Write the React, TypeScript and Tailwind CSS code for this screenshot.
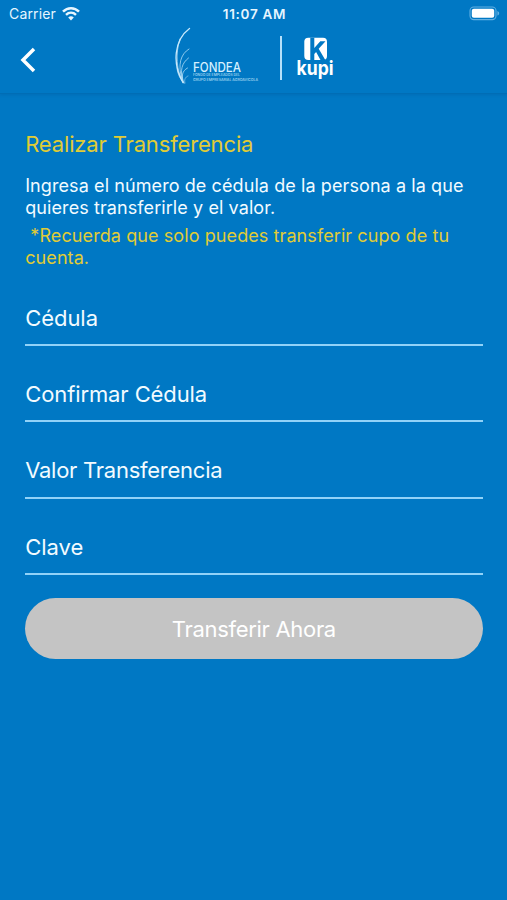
const fields = [
  { label: 'Cédula', spacing: 'tracking-[-0.05px]' },
  { label: 'Confirmar Cédula', spacing: 'tracking-[-0.1px]' },
  { label: 'Valor Transferencia', spacing: 'tracking-[-0.25px]' },
  { label: 'Clave', spacing: 'tracking-normal' },
]

function StatusBar() {
  return (
    <div className="grid h-7 grid-cols-3 items-center pr-[7px] pl-[9px] text-[#e6f6ff]">
      <div className="-mt-px flex items-center gap-[6px]">
        <span className="text-[14px] tracking-[0.15px]">Carrier</span>
        <svg className="h-[14px] w-[18px]" viewBox="0 0 18 14" fill="none">
          <path d="M1 4.7C5.6.1 12.4.1 17 4.7" stroke="currentColor" strokeWidth="2.5" />
          <path d="M4 7.9c2.9-2.8 7.1-2.8 10 0" stroke="currentColor" strokeWidth="2.4" />
          <path d="M6.2 10.4c1.7-1.5 3.9-1.5 5.6 0L9 13.5z" fill="currentColor" />
        </svg>
      </div>
      <span className="text-center text-[13.5px] font-semibold tracking-[0.7px] whitespace-nowrap">
        11:07 AM
      </span>
      <svg className="-mt-px h-[15px] w-[31px] justify-self-end" viewBox="0 0 31 15" fill="none">
        <rect x="1" y="1" width="26" height="12.6" rx="3.8" stroke="#62b0e2" strokeWidth="1.1" />
        <rect x="2.8" y="2.8" width="22.4" height="9" rx="2" fill="#fff" />
        <path d="M28.4 5v4.600c2.400-.8 2.400-3.800 0-4.600z" fill="#62b0e2" />
      </svg>
    </div>
  )
}

function FondeaLogo() {
  return (
    <svg className="h-[60px] w-[88px]" viewBox="174 25 88 60" fill="none">
      <g stroke="#c8e9fc" strokeLinecap="round">
        <path d="M189.500 27.500C174 39 172 63 183 81.500" strokeWidth="1.300" />
        <path d="M180 38C175 53 176.500 69 183 82" strokeWidth="1" opacity=".7" />
        <path d="M189 48C180.500 53 177.500 64 182 78" strokeWidth="1" opacity=".7" />
        <path d="M188.500 57C182 62 179.500 69 183 81" strokeWidth="1" opacity=".7" />
        <path d="M187.500 67C182 70 181 75 184 82" strokeWidth="1" opacity=".7" />
        <path d="M177 66c0 5 2 11 7 16" strokeWidth=".9" opacity=".6" />
        <path d="M188 75c-3 1-4 4-3 7" strokeWidth=".8" opacity=".6" />
      </g>
      <g fill="#d5efff" fontFamily="Inter, sans-serif">
        <text
          x="193"
          y="70.500"
          fontSize="13"
          fontWeight="500"
          textLength="48"
          lengthAdjust="spacingAndGlyphs">
          FONDEA
        </text>
        <g fontSize="3.600" fontWeight="500" opacity=".8">
          <text x="193" y="75.300" textLength="47" lengthAdjust="spacingAndGlyphs">
            FONDO DE EMPLEADOS DEL
          </text>
          <text x="193" y="79.600" textLength="65" lengthAdjust="spacingAndGlyphs">
            GRUPO EMPRESARIAL AGROAVICOLA
          </text>
        </g>
      </g>
    </svg>
  )
}

function KupiLogo() {
  return (
    <svg className="h-[52px] w-[44px]" viewBox="293 35 44 52" fill="none">
      <rect x="304.300" y="37.800" width="22.700" height="22.200" rx="4" fill="#fff" />
      <path
        d="M310.300 37.800h4v10.200l6-6.800h5.200l-6.800 7.600 6.600 11.200h-4.800l-4.400-7.900-1.800 2v5.900h-4z"
        fill="#0078c4"
      />
      <text
        x="296.500"
        y="75"
        fill="#fff"
        fontFamily="Inter, sans-serif"
        fontSize="20"
        fontWeight="700"
        textLength="37"
        lengthAdjust="spacingAndGlyphs">
        kupi
      </text>
    </svg>
  )
}

function Header() {
  return (
    <header className="h-[94px] border-b border-[#006db5] shadow-[0_1px_3px_rgba(0,50,100,0.15)]">
      <StatusBar />
      <div className="flex h-[64px] items-center">
        <button aria-label="Volver" className="ml-[20px] h-[26px] w-4">
          <svg className="h-[26px] w-4" viewBox="0 0 16 26" fill="none">
            <path d="M14 2L3 13l11 11" stroke="#fff" strokeWidth="3.5" />
          </svg>
        </button>
        <div className="ml-[138px] flex items-center">
          <div className="-mt-[9px]">
            <FondeaLogo />
          </div>
          <div className="mt-[-4px] ml-[18px] h-[44px] w-[1.500px] bg-[#b5e0fa]" />
          <div className="mt-[2px] ml-[11.500px]">
            <KupiLogo />
          </div>
        </div>
      </div>
    </header>
  )
}

function App() {
  return (
    <div className="min-h-[900px] w-full bg-[#0078c4] font-['Inter',sans-serif] text-[#f2fbff]">
      <Header />
      <main className="pt-[36px] pr-[24.500px] pl-[25.200px]">
        <h1 className="text-[22px] leading-[28px] tracking-[-0.15px] text-[#e0cc35]">
          Realizar Transferencia
        </h1>
        <p className="mt-[17px] text-[18px] leading-[22px] tracking-[0.09px] whitespace-nowrap">
          Ingresa el número de cédula de la persona a la que
          <br />
          quieres transferirle y el valor.
        </p>
        <p className="mt-[6px] text-[18px] leading-[22px] tracking-[0.09px] whitespace-pre text-[#e0cc35]">
          {' *Recuerda que solo puedes transferir cupo de tu\ncuenta.'}
        </p>

        <form className="mt-[22px]">
          {fields.map(({ label, spacing }) => (
            <div
              key={label}
              className="mb-[21.400px] flex h-[55px] items-center border-b-2 border-[#91d2f8] pt-px text-[22px]">
              <label className={spacing}>{label}</label>
            </div>
          ))}
          <button
            type="button"
            className="mt-px h-[61px] w-full rounded-full bg-[#c4c4c4] pt-[2px] text-[22px] tracking-[-0.3px] text-white">
            Transferir Ahora
          </button>
        </form>
      </main>
    </div>
  )
}

export default App
